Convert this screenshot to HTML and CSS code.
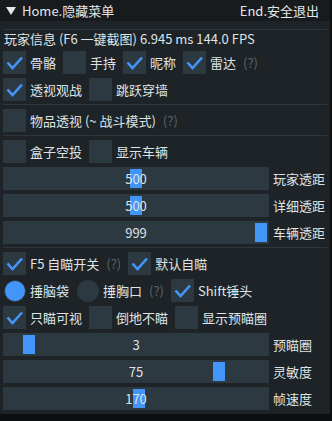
FILE: index.html
```html
<!DOCTYPE html>
<html lang="zh">
<head>
    <meta charset="UTF-8">
    <meta name="viewport" content="width=device-width, initial-scale=1.0">
    <title>Home.隐藏菜单</title>
    <link rel="stylesheet" href="styles.css">
</head>
<body>
    <div class="window">
        <div class="titlebar">
            <svg class="arrow" width="10" height="8" viewBox="0 0 10 8"><polygon points="0,0 10,0 5,8" fill="#e4e7e9"/></svg>
            <span class="title">Home.隐藏菜单</span>
            <span class="title-right">End.安全退出</span>
        </div>

        <div class="body">
            <div class="sep first"></div>
            <div class="info">玩家信息 (F6 一键截图) 6.945 ms 144.0 FPS</div>

            <div class="row">
                <label class="item"><span class="box"><svg viewBox="0 0 23 23"><path d="M4.5 11.5 L9.5 17 L19 6.5"/></svg></span>骨骼</label>
                <label class="item"><span class="box"></span>手持</label>
                <label class="item"><span class="box"><svg viewBox="0 0 23 23"><path d="M4.5 11.5 L9.5 17 L19 6.5"/></svg></span>昵称</label>
                <label class="item"><span class="box"><svg viewBox="0 0 23 23"><path d="M4.5 11.5 L9.5 17 L19 6.5"/></svg></span>雷达</label>
                <span class="help">(?)</span>
            </div>
            <div class="row">
                <label class="item"><span class="box"><svg viewBox="0 0 23 23"><path d="M4.5 11.5 L9.5 17 L19 6.5"/></svg></span>透视观战</label>
                <label class="item"><span class="box"></span>跳跃穿墙</label>
            </div>

            <div class="sep"></div>
            <div class="row">
                <label class="item"><span class="box"></span>物品透视 (~ 战斗模式)</label>
                <span class="help">(?)</span>
            </div>

            <div class="sep"></div>
            <div class="row">
                <label class="item"><span class="box"></span>盒子空投</label>
                <label class="item"><span class="box"></span>显示车辆</label>
            </div>

            <div class="slider-row">
                <div class="slider"><span class="grab" style="left: 127px"></span><span class="val">500</span></div>
                <span class="slider-label">玩家透距</span>
            </div>
            <div class="slider-row">
                <div class="slider"><span class="grab" style="left: 127px"></span><span class="val">500</span></div>
                <span class="slider-label">详细透距</span>
            </div>
            <div class="slider-row">
                <div class="slider"><span class="grab" style="left: 252px"></span><span class="val">999</span></div>
                <span class="slider-label">车辆透距</span>
            </div>

            <div class="sep"></div>
            <div class="row">
                <label class="item"><span class="box"><svg viewBox="0 0 23 23"><path d="M4.5 11.5 L9.5 17 L19 6.5"/></svg></span>F5 自瞄开关</label>
                <span class="help">(?)</span>
                <label class="item"><span class="box"><svg viewBox="0 0 23 23"><path d="M4.5 11.5 L9.5 17 L19 6.5"/></svg></span>默认自瞄</label>
            </div>
            <div class="row">
                <label class="item"><span class="radio on"></span>捶脑袋</label>
                <label class="item"><span class="radio"></span>捶胸口</label>
                <span class="help">(?)</span>
                <label class="item"><span class="box"><svg viewBox="0 0 23 23"><path d="M4.5 11.5 L9.5 17 L19 6.5"/></svg></span>Shift锤头</label>
            </div>
            <div class="row">
                <label class="item"><span class="box"><svg viewBox="0 0 23 23"><path d="M4.5 11.5 L9.5 17 L19 6.5"/></svg></span>只瞄可视</label>
                <label class="item"><span class="box"></span>倒地不瞄</label>
                <label class="item"><span class="box"></span>显示预瞄圈</label>
            </div>

            <div class="slider-row">
                <div class="slider"><span class="grab" style="left: 20px"></span><span class="val">3</span></div>
                <span class="slider-label">预瞄圈</span>
            </div>
            <div class="slider-row">
                <div class="slider"><span class="grab" style="left: 210px"></span><span class="val">75</span></div>
                <span class="slider-label">灵敏度</span>
            </div>
            <div class="slider-row">
                <div class="slider"><span class="grab" style="left: 130px"></span><span class="val">170</span></div>
                <span class="slider-label">帧速度</span>
            </div>
        </div>
    </div>
</body>
</html>
```

FILE: styles.css
```css
html, body {
    margin: 0;
    background: #0e0f10;
}
body {
    font-family: "Noto Sans CJK SC", "Noto Sans", sans-serif;
    font-size: 13px;
    color: #dfe3e6;
}
.window {
    width: 330px;
    background: #1d2327;
}
.titlebar {
    height: 21px;
    display: flex;
    align-items: center;
    background: #171b1e;
    color: #e4e7e9;
    padding: 0 11px 0 6px;
}
.arrow {
    margin-right: 6px;
}
.title-right {
    margin-left: auto;
}
.body {
    display: flex;
    flex-direction: column;
    gap: 4px;
    padding: 8px 3px 4px;
}
.sep {
    height: 1px;
    background: #2c373e;
    margin-top: -1px;
}
.sep.first {
    margin-top: 0;
}
.info {
    height: 16px;
    line-height: 16px;
    margin-top: -3px;
    padding-left: 1px;
}
.row {
    height: 23px;
    display: flex;
    align-items: center;
    gap: 7px;
}
.item {
    display: flex;
    align-items: center;
    gap: 4px;
    white-space: nowrap;
}
.box {
    width: 23px;
    height: 23px;
    flex: none;
    background: #2d3940;
}
.box svg {
    display: block;
    width: 23px;
    height: 23px;
}
.box path {
    fill: none;
    stroke: #4296fa;
    stroke-width: 2.6;
}
.radio {
    width: 22px;
    height: 22px;
    flex: none;
    border-radius: 50%;
    background: #2d3940;
    box-sizing: border-box;
    margin-left: 1px;
}
.radio.on {
    background: #4296fa;
    border: 1px solid #2d3940;
}
.help {
    color: #5a656d;
}
.slider-row {
    height: 23px;
    display: flex;
    align-items: center;
}
.slider {
    width: 266px;
    height: 23px;
    background: #2d3940;
    position: relative;
    display: flex;
    align-items: center;
    justify-content: center;
}
.grab {
    position: absolute;
    top: 2px;
    width: 12px;
    height: 19px;
    background: #4296fa;
}
.val {
    position: relative;
}
.slider-label {
    margin-left: 4px;
}
```
